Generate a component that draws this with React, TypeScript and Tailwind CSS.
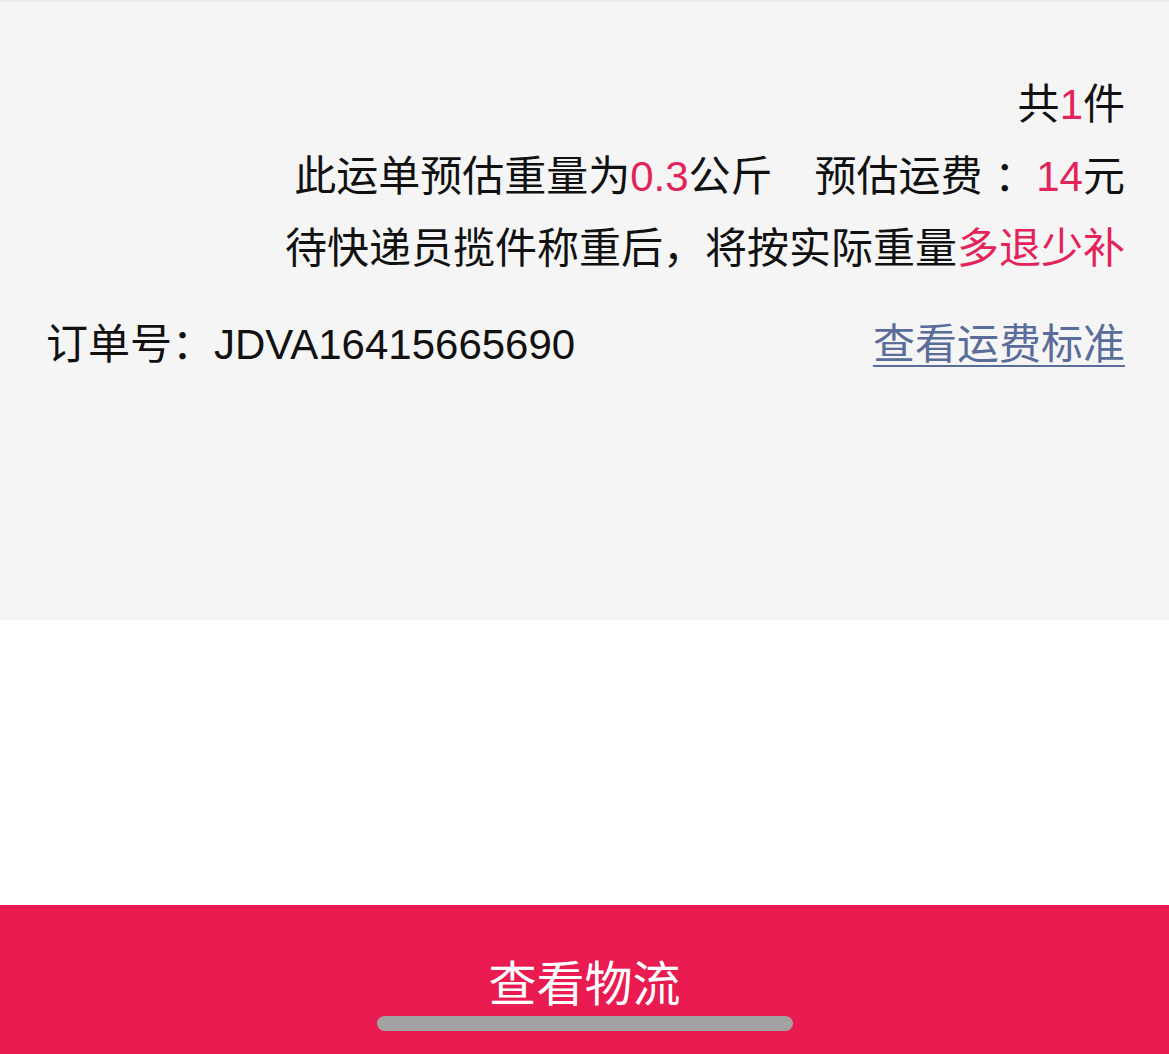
const font = "font-['Liberation_Sans','Noto_Sans_CJK_SC',sans-serif]";

const Red = ({ children }: { children: React.ReactNode }) => (
  <span className="text-[#e3245a]">{children}</span>
);

const App = () => {
  return (
    <div className={`w-[1169px] h-[1054px] flex flex-col ${font} text-[#111]`}>
      {/* order info */}
      <div className="h-[620px] bg-[#f5f5f5] border-t-2 border-[#ececec] pl-[46px] pr-[44px] pt-[67px]">
        <div className="flex flex-col items-end text-[42px] leading-[72px]">
          <div>
            共<Red>1</Red>件
          </div>
          <div>
            此运单预估重量为<Red>0.3</Red>公斤　预估运费 ：<Red>14</Red>元
          </div>
          <div>
            待快递员揽件称重后，将按实际重量<Red>多退少补</Red>
          </div>
        </div>
        <div className="flex justify-between items-center mt-[24px] text-[42px] leading-[72px]">
          <span>订单号：JDVA16415665690</span>
          <span className="text-[#5a6c99] underline underline-offset-[6px] decoration-2">
            查看运费标准
          </span>
        </div>
      </div>

      <div className="flex-1 bg-white" />

      {/* bottom button */}
      <div className="h-[149px] bg-[#e91b50] flex flex-col items-center pt-[50px]">
        <span className="text-white text-[48px] leading-[60px]">查看物流</span>
        <div className="mt-[1px] w-[416px] h-[15px] rounded-full bg-[#a2a2a2]" />
      </div>
    </div>
  );
};

export default App;
